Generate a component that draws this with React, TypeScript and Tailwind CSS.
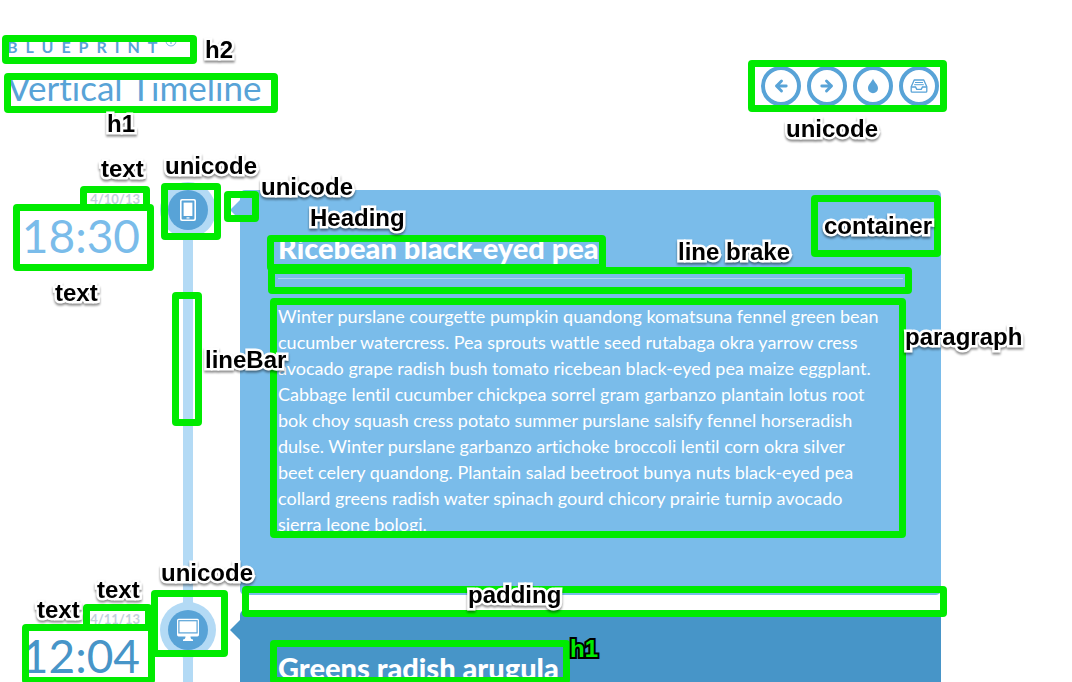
import React from "react";

type Entry = {
  date: string;
  time: string;
  title: string;
  text: string;
  card: string;
  pointer: string;
  timeColor: string;
  icon: React.ReactNode;
};

const PhoneIcon = () => (
  <svg viewBox="0 0 18 24" className="h-6 w-[18px]" aria-hidden="true">
    <rect x="1" y="1" width="16" height="22" rx="2" fill="white" />
    <rect x="2.6" y="2.6" width="12.8" height="18.8" rx="0.8" fill="#58a3d7" />
    <rect x="4.6" y="4.6" width="8.800" height="13.4" fill="white" />
    <rect x="7.5" y="19.3" width="3" height="1.2" fill="white" />
  </svg>
);

const DesktopIcon = () => (
  <svg viewBox="0 0 24 24" className="size-6" aria-hidden="true">
    <path d="M2.600 .8h18.800a1.600 1.600 0 0 1 1.600 1.600v14.400a1.600 1.600 0 0 1-1.600 1.600h-6.900c0 2 .8 2.700 2.500 3.100v1.500H7v-1.500c1.700-.4 2.500-1.100 2.500-3.100H2.600A1.600 1.600 0 0 1 1 16.800V2.400A1.600 1.600 0 0 1 2.600.8z" fill="white" />
    <path d="M2.300 2.100h19.400v13.400H2.300z" fill="#58a3d7" />
    <path d="M3.500 3.300h17v11H3.500z" fill="white" />
  </svg>
);

const ArrowIcon = ({ flip }: { flip?: boolean }) => (
  <svg viewBox="0 0 16 16" className={flip ? "size-4 rotate-180" : "size-4"} aria-hidden="true">
    <path d="M8.500 3 3.500 8l5 5M3.500 8h9.700" fill="none" stroke="currentColor" strokeWidth="2.900" strokeLinecap="round" strokeLinejoin="round" />
  </svg>
);

const DropIcon = () => (
  <svg viewBox="0 0 16 16" className="size-4" aria-hidden="true">
    <path d="M8 .6c.9 3.100 5 6 5 9.700a5 5 0 0 1-10 0C3 6.600 7.100 3.700 8 .6z" fill="currentColor" />
  </svg>
);

const TrayIcon = () => (
  <svg viewBox="0 0 18 16" className="h-4 w-[18px]" aria-hidden="true" fill="none" stroke="currentColor">
    <path d="M4.200 2h9.600l3 6.800v4.400a1 1 0 0 1-1 1H2.200a1 1 0 0 1-1-1V8.800z" strokeWidth="1.300" strokeLinejoin="round" />
    <path d="M1.500 9h4l1.300 2.400h4.400L12.500 9h4" strokeWidth="1.400" />
    <path d="M5 4.500h8M4.200 6.700h9.600" strokeWidth="1" />
  </svg>
);

const entries: Entry[] = [
  {
    date: "4/10/13",
    time: "18:30",
    title: "Ricebean black-eyed pea",
    text: "Winter purslane courgette pumpkin quandong komatsuna fennel green bean cucumber watercress. Pea sprouts wattle seed rutabaga okra yarrow cress avocado grape radish bush tomato ricebean black-eyed pea maize eggplant. Cabbage lentil cucumber chickpea sorrel gram garbanzo plantain lotus root bok choy squash cress potato summer purslane salsify fennel horseradish dulse. Winter purslane garbanzo artichoke broccoli lentil corn okra silver beet celery quandong. Plantain salad beetroot bunya nuts black-eyed pea collard greens radish water spinach gourd chicory prairie turnip avocado sierra leone bologi.",
    card: "bg-[#7abcea]",
    pointer: "border-r-[#7abcea]",
    timeColor: "text-[#7abcea]",
    icon: <PhoneIcon />,
  },
  {
    date: "4/11/13",
    time: "12:04",
    title: "Greens radish arugula",
    text: "",
    card: "bg-[#4795c8]",
    pointer: "border-r-[#4795c8]",
    timeColor: "text-[#4795c8]",
    icon: <DesktopIcon />,
  },
];

const navItems = [
  { label: "Previous", icon: <ArrowIcon /> },
  { label: "Next", icon: <ArrowIcon flip /> },
  { label: "Drop", icon: <DropIcon /> },
  { label: "Archive", icon: <TrayIcon /> },
];

const frames = [
  "left-[2px] top-[35px] w-[195px] h-[29px]",
  "left-[4px] top-[73px] w-[274px] h-[40px]",
  "left-[748px] top-[60px] w-[199px] h-[52px]",
  "left-[80px] top-[186px] w-[70px] h-[25px]",
  "left-[13px] top-[204px] w-[141px] h-[67px]",
  "left-[161px] top-[183px] w-[60px] h-[57px]",
  "left-[224px] top-[191px] w-[35px] h-[31px]",
  "left-[811px] top-[195px] w-[130px] h-[62px]",
  "left-[267px] top-[235px] w-[339px] h-[36px]",
  "left-[268px] top-[267px] w-[644px] h-[27px]",
  "left-[270px] top-[298px] w-[636px] h-[240px]",
  "left-[172px] top-[292px] w-[30px] h-[134px]",
  "left-[242px] top-[586px] w-[705px] h-[31px]",
  "left-[151px] top-[590px] w-[77px] h-[67px]",
  "left-[83px] top-[604px] w-[69px] h-[27px]",
  "left-[22px] top-[624px] w-[133px] h-[60px]",
  "left-[270px] top-[640px] w-[300px] h-[44px]",
];

const labels = [
  { text: "h2", place: "left-[205px] top-[36px]" },
  { text: "h1", place: "left-[107px] top-[110px]" },
  { text: "unicode", place: "left-[786px] top-[115px]" },
  { text: "text", place: "left-[101px] top-[155px]" },
  { text: "unicode", place: "left-[165px] top-[152px]" },
  { text: "unicode", place: "left-[261px] top-[173px]" },
  { text: "Heading", place: "left-[310px] top-[204px]" },
  { text: "container", place: "left-[824px] top-[212px]" },
  { text: "line brake", place: "left-[678px] top-[238px]" },
  { text: "text", place: "left-[55px] top-[279px]" },
  { text: "lineBar", place: "left-[205px] top-[346px]" },
  { text: "paragraph", place: "left-[905px] top-[323px]" },
  { text: "unicode", place: "left-[161px] top-[559px]" },
  { text: "text", place: "left-[97px] top-[576px]" },
  { text: "text", place: "left-[37px] top-[596px]" },
  { text: "padding", place: "left-[468px] top-[581px]" },
];

function Annotations() {
  return (
    <div className="pointer-events-none absolute inset-0 font-['Liberation_Sans',Arial,sans-serif] text-2xl leading-7 font-bold whitespace-nowrap">
      {frames.map((place) => (
        <div key={place} className={`absolute rounded-[4px] border-[7px] border-[#00eb00] ${place}`} />
      ))}
      {labels.map(({ text, place }) => (
        <span
          key={place}
          className={`absolute text-black drop-shadow-[0_2px_1px_rgba(0,0,0,0.45)] [-webkit-text-stroke:5px_white] [paint-order:stroke_fill] ${place}`}
        >
          {text}
        </span>
      ))}
      <span className="absolute top-[635px] left-[570px] text-[#00eb00] [-webkit-text-stroke:4px_black] [paint-order:stroke_fill]">
        h1
      </span>
    </div>
  );
}

export default function App() {
  return (
    <div className="relative h-screen overflow-hidden bg-white font-['Lato',sans-serif] [font-variant-ligatures:none]">
      <div className="pr-[131px]">
        <header className="flex items-start justify-between pt-9 pl-[7px] text-[#58a3d7]">
          <div>
            <h2 className="flex items-start text-base leading-[22px] font-bold tracking-[8px]">
              BLUEPRINT
              <svg viewBox="0 0 12 12" className="size-3" aria-hidden="true" fill="none" stroke="currentColor">
                <circle cx="6" cy="5" r="5" strokeWidth="0.8" />
                <path d="M6 4v4M6 2v1" strokeWidth="1" />
              </svg>
            </h2>
            <h1 className="mt-2 text-[35px] leading-[42px]">Vertical Timeline</h1>
          </div>
          <nav className="mt-[30px] mr-[2px] flex gap-1.5">
            {navItems.map(({ label, icon }) => (
              <a key={label} href="#" aria-label={label} className="flex size-10 items-center justify-center rounded-full border-4 border-[#58a3d7]">
                {icon}
              </a>
            ))}
          </nav>
        </header>

        <ul className="mt-[82px]">
          {entries.map((e) => (
            <li key={e.time} className="flex">
              <div className="w-[140px] shrink-0 text-right">
                <time className="block text-[13px] leading-[18px] font-bold text-[#c3d0dc]">{e.date}</time>
                <time className={`block text-[46px] leading-14 ${e.timeColor}`}>{e.time}</time>
              </div>
              <div className="relative flex w-[100px] shrink-0 justify-center pr-1">
                <div className="w-2.5 bg-[#b3daf5]" />
                <div className="absolute left-5 -mt-2 flex size-14 items-center justify-center rounded-full bg-[#b3daf5]">
                  <div className="flex size-10 items-center justify-center rounded-full bg-[#58a3d7]">{e.icon}</div>
                </div>
              </div>
              <div className="min-w-0 flex-1 pb-[15px]">
                <article className={`relative rounded-[5px] px-[38px] pt-10 pb-[58px] text-white ${e.card}`}>
                  <span className={`absolute top-2.5 right-full border-y-10 border-r-10 border-y-transparent ${e.pointer}`} />
                  <h2 className="border-b border-white/40 pb-3 text-[29px] leading-9 font-black">{e.title}</h2>
                  <p className="mt-6 pr-[21px] text-lg leading-[26px]">{e.text}</p>
                </article>
              </div>
            </li>
          ))}
        </ul>
      </div>
      <Annotations />
    </div>
  );
}
